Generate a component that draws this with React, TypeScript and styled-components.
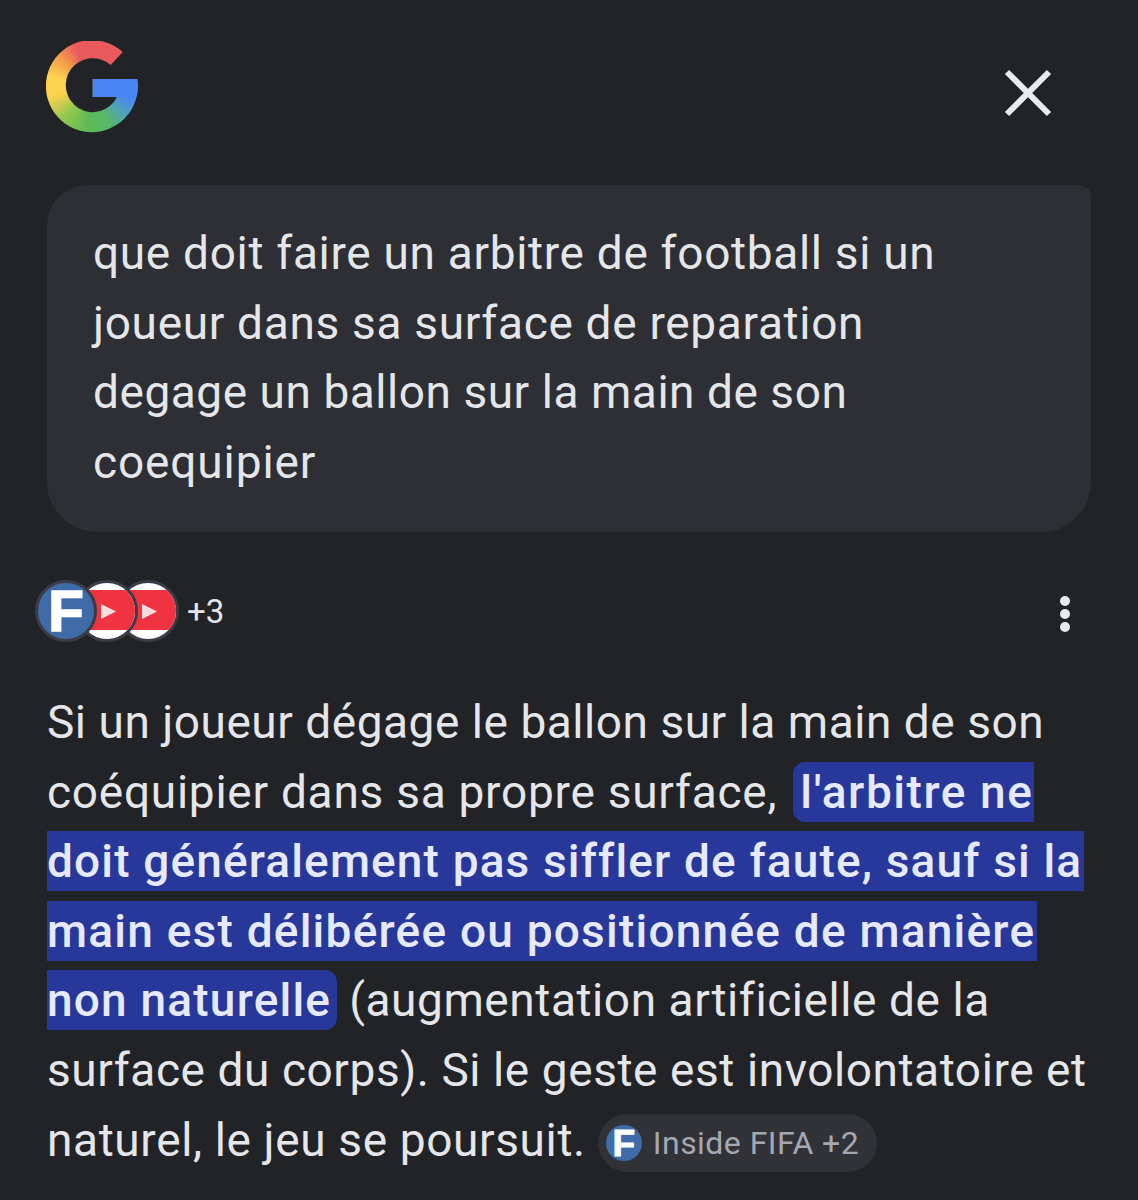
import styled, { createGlobalStyle } from "styled-components";

const GlobalStyle = createGlobalStyle`
  html, body {
    margin: 0;
    background: #222327;
    font-family: "Roboto", "Liberation Sans", sans-serif;
  }
`;

const Page = styled.div`
  width: 1138px;
  height: 1200px;
  overflow: hidden;
  box-sizing: border-box;
  padding: 41px 47px 0 47px;
  color: #e4e6e9;
`;

const Header = styled.header`
  display: flex;
  justify-content: space-between;
  align-items: flex-start;
  height: 144px;
  padding-right: 39px;
`;

const GoogleLogo = styled.div`
  width: 92px;
  height: 92px;
  margin-left: -1px;
  background:
    linear-gradient(#4a86f3, #4a86f3) right top 38px / 46px 18px no-repeat,
    conic-gradient(
      #ea5a5c 0deg,
      #ea5a5c 48deg,
      #4a86f3 48deg,
      #4a86f3 105deg,
      #4fa3b8 130deg,
      #58b868 155deg,
      #5dba55 185deg,
      #8dc64f 220deg,
      #fdd24d 258deg,
      #fdd24d 285deg,
      #f2984f 315deg,
      #ea5a5c 338deg,
      #ea5a5c 360deg
    );
  clip-path: path("M76.7 11 A46 46 0 1 0 91.3 38 H46.7 V56 H71 A27 27 0 1 1 64.7 24 Z");
`;

const CloseButton = styled.svg`
  width: 48px;
  height: 48px;
  margin-top: 28px;
  stroke: #e8eaed;
  stroke-width: 6;
  fill: none;
`;

const QueryCard = styled.div`
  box-sizing: border-box;
  width: 1044px;
  height: 347px;
  padding: 34px 46px 0 46px;
  background: #2d2f34;
  border-radius: 40px 12px 50px 50px;
  font-size: 46px;
  letter-spacing: 0.68px;
  line-height: 69.6px;
  font-weight: 400;
`;

const Line = styled.div<{ $tracking?: number }>`
  white-space: nowrap;
  ${(p) => (p.$tracking !== undefined ? `letter-spacing: ${p.$tracking}px;` : "")}
`;

const SourcesRow = styled.div`
  display: flex;
  align-items: center;
  height: 62px;
  margin: 48px 0 0 -12px;
`;

const FaviconStack = styled.div`
  display: flex;
`;

const FifaBadge = styled.div<{ $size: number; $glyph: number }>`
  display: flex;
  align-items: center;
  justify-content: center;
  box-sizing: border-box;
  flex: none;
  width: ${(p) => p.$size}px;
  height: ${(p) => p.$size}px;
  border-radius: 50%;
  background: #3f6ca8;
  color: #fff;
  font-family: "Liberation Sans", sans-serif;
  font-weight: 700;
  font-size: ${(p) => p.$glyph}px;
  line-height: 1;
  letter-spacing: 0;
  -webkit-text-stroke: ${(p) => p.$size / 36}px #fff;
`;

const StackedBadge = styled(FifaBadge)`
  border: 3px solid #3a3c47;
  z-index: 3;
`;

const VideoIcon = styled.svg<{ $layer: number }>`
  width: 62px;
  height: 62px;
  flex: none;
  margin-left: -21px;
  z-index: ${(p) => p.$layer};
`;

const MoreCount = styled.span`
  margin-left: 8px;
  font-size: 33px;
`;

const MoreButton = styled.svg`
  width: 12px;
  height: 38px;
  margin-top: 6px;
  margin-left: auto;
  margin-right: 20px;
  fill: #e8eaed;
`;

const Answer = styled.div`
  margin-top: 46px;
  font-size: 46px;
  letter-spacing: 0.57px;
  line-height: 69.6px;
`;

const Highlight = styled.span<{ $tracking?: number }>`
  background: #27389a;
  color: #e6e9fb;
  font-weight: 500;
  letter-spacing: ${(p) => p.$tracking ?? 1.2}px;
  padding: 3px 6px 3px 7px;
`;

const HighlightFull = styled(Highlight)`
  padding-left: 0;
  padding-right: 2px;
`;

const HighlightFirst = styled(Highlight)`
  border-radius: 12px 0 0 12px;
  margin-left: 4px;
  padding-right: 1px;
`;

const HighlightLast = styled(Highlight)`
  border-radius: 0 12px 12px 0;
  padding-left: 0;
`;

const SourceChip = styled.span`
  display: inline-flex;
  align-items: center;
  gap: 11px;
  height: 58px;
  box-sizing: border-box;
  padding: 0 18px 0 8px;
  margin-left: 12px;
  border-radius: 29px;
  background: #303238;
  color: #a5a8b0;
  font-size: 32px;
  letter-spacing: 0.45px;
  line-height: 1;
  vertical-align: middle;
`;

const Video = () => (
  <>
    <circle cx="31" cy="31" r="29.5" fill="#fff" stroke="#3a3c47" strokeWidth="3" />
    <path d="M12.5 10 H49.5 A28 28 0 0 1 51.6 50 H10.4 A28 28 0 0 1 12.5 10 Z" fill="#ef3340" />
    <path d="M25 24 L40 31.5 L25 39 Z" fill="#f7dede" />
  </>
);

export default function App() {
  return (
    <Page>
      <GlobalStyle />
      <Header>
        <GoogleLogo />
        <CloseButton viewBox="0 0 48 48">
          <path d="M3 3 L45 45 M45 3 L3 45" />
        </CloseButton>
      </Header>

      <QueryCard>
        <Line>que doit faire un arbitre de football si un</Line>
        <Line>joueur dans sa surface de reparation</Line>
        <Line $tracking={0.54}>degage un ballon sur la main de son</Line>
        <Line $tracking={0.88}>coequipier</Line>
      </QueryCard>

      <SourcesRow>
        <FaviconStack>
          <StackedBadge $size={62} $glyph={58}>F</StackedBadge>
          <VideoIcon $layer={2} viewBox="0 0 62 62">
            <Video />
          </VideoIcon>
          <VideoIcon $layer={1} viewBox="0 0 62 62">
            <Video />
          </VideoIcon>
        </FaviconStack>
        <MoreCount>+3</MoreCount>
        <MoreButton viewBox="0 0 12 38">
          <circle cx="6" cy="6" r="5" />
          <circle cx="6" cy="19" r="5" />
          <circle cx="6" cy="32" r="5" />
        </MoreButton>
      </SourcesRow>

      <Answer>
        <Line $tracking={0.53}>Si un joueur dégage le ballon sur la main de son</Line>
        <Line $tracking={0.74}>
          coéquipier dans sa propre surface, <HighlightFirst $tracking={1.55}>l'arbitre ne</HighlightFirst>
        </Line>
        <Line>
          <HighlightFull $tracking={1.14}>doit généralement pas siffler de faute, sauf si la</HighlightFull>
        </Line>
        <Line>
          <HighlightFull $tracking={1.22}>main est délibérée ou positionnée de manière</HighlightFull>
        </Line>
        <Line>
          <HighlightLast>non naturelle</HighlightLast> (augmentation artificielle de la
        </Line>
        <Line>surface du corps). Si le geste est involontatoire et</Line>
        <Line $tracking={0.63}>
          naturel, le jeu se poursuit.
          <SourceChip>
            <FifaBadge $size={36} $glyph={37}>F</FifaBadge>
            Inside FIFA +2
          </SourceChip>
        </Line>
      </Answer>
    </Page>
  );
}
